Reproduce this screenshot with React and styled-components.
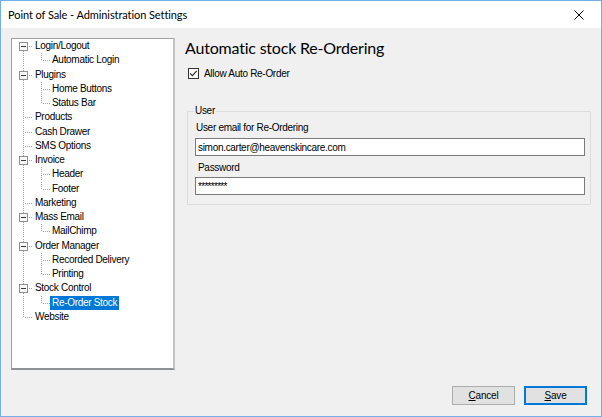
import React from "react";
import styled, { createGlobalStyle } from "styled-components";

const GlobalStyle = createGlobalStyle`
  html, body { margin: 0; padding: 0; background: #ffffff; }
  #root { width: 602px; height: 417px; }
  * { box-sizing: border-box; }
`;

const ROW_H = 14.25;
const CY = 7.5;

const Window = styled.div`
  width: 602px;
  height: 417px;
  border: 1px solid #72b0ea;
  display: flex;
  flex-direction: column;
  background: #f0f0f0;
  font-family: "Liberation Sans", Arial, sans-serif;
`;

const TitleBar = styled.div`
  height: 27px;
  flex: none;
  background: #ffffff;
  display: flex;
  align-items: center;
  justify-content: space-between;
  padding-left: 7px;
  font: 11px Lato, "Noto Sans", sans-serif;
  letter-spacing: -0.08px;
  color: #000;
`;

const CloseButton = styled.div`
  width: 45px;
  height: 27px;
  display: flex;
  align-items: center;
  justify-content: center;
`;

const Body = styled.div`
  flex: 1;
  display: flex;
  flex-direction: column;
  padding: 10px 10px 11px 10px;
`;

const Main = styled.div`
  display: flex;
  gap: 10px;
  height: 332px;
  flex: none;
`;

const Tree = styled.div`
  width: 164px;
  height: 332px;
  flex: none;
  background: #ffffff;
  border-style: solid;
  border-width: 1px 2px 2px 1px;
  border-color: #a0a0a0 #c2c2c2 #8f9295 #a0a0a0;
  display: flex;
  flex-direction: column;
`;

const Row = styled.div`
  height: ${ROW_H}px;
  display: flex;
  align-items: stretch;
  flex: none;
`;

const Guide = styled.svg`
  display: block;
  flex: none;
`;

const NodeLabel = styled.span`
  padding: 0 2px;
  line-height: ${ROW_H}px;
  font-size: 10px;
  letter-spacing: -0.3px;
  white-space: nowrap;
  color: ${(p) => (p.$selected ? "#ffffff" : "#000000")};
  background: ${(p) => (p.$selected ? "#0078d7" : "transparent")};
`;

const RightPane = styled.div`
  flex: 1;
  display: flex;
  flex-direction: column;
  min-width: 0;
`;

const Heading = styled.h1`
  margin: 0;
  font: 16px/20px Lato, "Noto Sans", sans-serif;
  letter-spacing: -0.2px;
  color: #000;
  font-weight: 400;
`;

const CheckRow = styled.label`
  display: flex;
  align-items: center;
  gap: 5px;
  height: 11px;
  margin: 10px 0 0 3px;
  font-size: 10px;
  line-height: 11px;
  letter-spacing: -0.3px;
  color: #000;
`;

const Group = styled.fieldset`
  margin: 26px 0 0 2px;
  padding: 0 5px 9px 6px;
  border: 1px solid #dcdcdc;
  min-width: 0;
`;

const Legend = styled.legend`
  padding: 0 1px;
  font-size: 10px;
  line-height: 12px;
  letter-spacing: -0.3px;
  color: #000;
`;

const FieldLabel = styled.div`
  margin: ${(p) => p.$top}px 0 0 ${(p) => p.$indent}px;
  font-size: 10px;
  line-height: 12px;
  letter-spacing: -0.3px;
  color: #000;
`;

const TextBox = styled.input`
  display: block;
  width: calc(100% - 1px);
  height: 18px;
  margin: ${(p) => p.$top}px 0 0 1px;
  border: 1px solid #7a7a7a;
  background: #ffffff;
  padding: 0 2px;
  font-family: "Liberation Sans", Arial, sans-serif;
  font-size: 10px;
  letter-spacing: ${(p) => (p.$masked ? "-0.7px" : "-0.3px")};
  color: #000;
  outline: none;
`;

const Footer = styled.div`
  display: flex;
  justify-content: flex-end;
  gap: 9px;
  margin-top: 16px;
  padding-right: 4px;
`;

const Button = styled.button`
  width: 63px;
  height: 19px;
  padding: 0;
  background: #e1e1e1;
  border: 1px solid ${(p) => (p.$default ? "#0078d7" : "#adadad")};
  box-shadow: ${(p) => (p.$default ? "inset 0 0 0 1px #0078d7" : "none")};
  font-family: "Liberation Sans", Arial, sans-serif;
  font-size: 10px;
  letter-spacing: -0.2px;
  color: #000;
`;

const treeItems = [
  { t: "Login/Logout", l: 1, exp: true },
  { t: "Automatic Login", l: 2, last: true },
  { t: "Plugins", l: 1, exp: true },
  { t: "Home Buttons", l: 2 },
  { t: "Status Bar", l: 2, last: true },
  { t: "Products", l: 1 },
  { t: "Cash Drawer", l: 1 },
  { t: "SMS Options", l: 1 },
  { t: "Invoice", l: 1, exp: true },
  { t: "Header", l: 2 },
  { t: "Footer", l: 2, last: true },
  { t: "Marketing", l: 1 },
  { t: "Mass Email", l: 1, exp: true },
  { t: "MailChimp", l: 2, last: true },
  { t: "Order Manager", l: 1, exp: true },
  { t: "Recorded Delivery", l: 2 },
  { t: "Printing", l: 2, last: true },
  { t: "Stock Control", l: 1, exp: true },
  { t: "Re-Order Stock", l: 2, last: true, sel: true },
  { t: "Website", l: 1 },
];

function Guides({ item, first, last }) {
  const w = item.l === 1 ? 21 : 38;
  const dot = { stroke: "#a0a0a0", strokeWidth: 1, strokeDasharray: "1 1", shapeRendering: "crispEdges" };
  return (
    <Guide width={w} height={ROW_H} viewBox={`0 0 ${w} ${ROW_H}`}>
      <line x1="11.5" y1={first ? CY : 0} x2="11.5" y2={last ? CY : ROW_H} {...dot} />
      {item.l === 1 && <line x1="13" y1={CY} x2="21" y2={CY} {...dot} />}
      {item.l === 2 && (
        <>
          <line x1="29.5" y1="0" x2="29.5" y2={item.last ? CY : ROW_H} {...dot} />
          <line x1="31" y1={CY} x2="38" y2={CY} {...dot} />
        </>
      )}
      {item.exp && (
        <g shapeRendering="crispEdges">
          <rect x="7.5" y="3.5" width="8" height="8" fill="#f8f8f8" stroke="#919191" />
          <line x1="9" y1={CY} x2="14" y2={CY} stroke="#333a45" strokeWidth="1" />
        </g>
      )}
    </Guide>
  );
}

function CheckIcon() {
  return (
    <svg width="11" height="11" viewBox="0 0 11 11" style={{ display: "block", flex: "none" }}>
      <rect x="0.5" y="0.5" width="10" height="10" fill="#ffffff" stroke="#333333" shapeRendering="crispEdges" />
      <polyline points="2.2,5.4 4.3,7.6 8.8,2.8" fill="none" stroke="#222222" strokeWidth="1.1" />
    </svg>
  );
}

function CloseIcon() {
  return (
    <svg width="10" height="10" viewBox="0 0 10 10" style={{ display: "block" }}>
      <path d="M0.5 0.5 L9.5 9.5 M9.5 0.5 L0.5 9.5" stroke="#000" strokeWidth="1" fill="none" />
    </svg>
  );
}

export default function App() {
  return (
    <>
      <GlobalStyle />
      <Window>
        <TitleBar>
          <span>Point of Sale - Administration Settings</span>
          <CloseButton>
            <CloseIcon />
          </CloseButton>
        </TitleBar>
        <Body>
          <Main>
            <Tree>
              {treeItems.map((item, i) => (
                <Row key={item.t}>
                  <Guides item={item} first={i === 0} last={i === treeItems.length - 1} />
                  <NodeLabel $selected={item.sel}>{item.t}</NodeLabel>
                </Row>
              ))}
            </Tree>
            <RightPane>
              <Heading>Automatic stock Re-Ordering</Heading>
              <CheckRow>
                <CheckIcon />
                <span>Allow Auto Re-Order</span>
              </CheckRow>
              <Group>
                <Legend>User</Legend>
                <FieldLabel $top={5} $indent={2}>User email for Re-Ordering</FieldLabel>
                <TextBox $top={4} readOnly value="simon.carter@heavenskincare.com" />
                <FieldLabel $top={6} $indent={4}>Password</FieldLabel>
                <TextBox $top={3} $masked readOnly value="*********" />
              </Group>
            </RightPane>
          </Main>
          <Footer>
            <Button>
              <u>C</u>ancel
            </Button>
            <Button $default>
              <u>S</u>ave
            </Button>
          </Footer>
        </Body>
      </Window>
    </>
  );
}
